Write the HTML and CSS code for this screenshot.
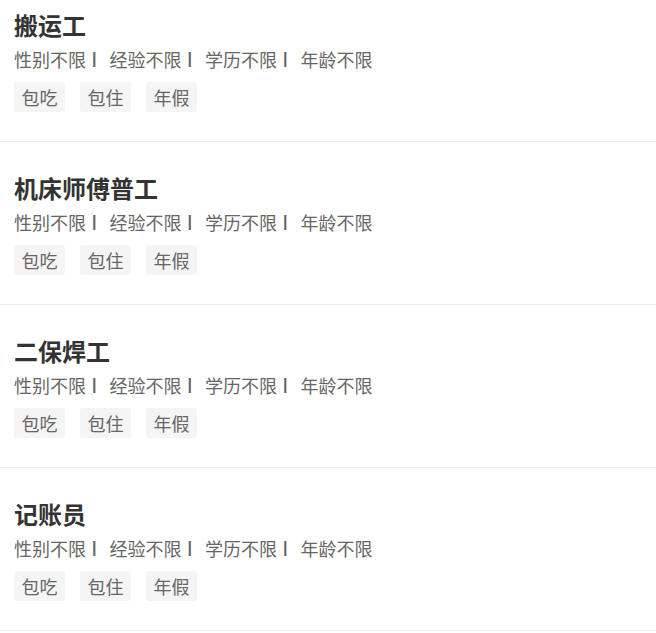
FILE: index.html
```html
<!DOCTYPE html>
<html lang="zh-CN">
<head>
<meta charset="utf-8">
<title>职位列表</title>
<link rel="stylesheet" href="styles.css">
</head>
<body>
<ul class="job-list">
  <li class="job job-first">
    <h3 class="job-title">搬运工</h3>
    <div class="job-reqs"><span class="req">性别不限</span><span class="sep">|</span><span class="req">经验不限</span><span class="sep">|</span><span class="req">学历不限</span><span class="sep">|</span><span class="req">年龄不限</span></div>
    <div class="job-tags"><span class="tag">包吃</span><span class="tag">包住</span><span class="tag">年假</span></div>
  </li>
  <li class="job">
    <h3 class="job-title">机床师傅普工</h3>
    <div class="job-reqs"><span class="req">性别不限</span><span class="sep">|</span><span class="req">经验不限</span><span class="sep">|</span><span class="req">学历不限</span><span class="sep">|</span><span class="req">年龄不限</span></div>
    <div class="job-tags"><span class="tag">包吃</span><span class="tag">包住</span><span class="tag">年假</span></div>
  </li>
  <li class="job">
    <h3 class="job-title">二保焊工</h3>
    <div class="job-reqs"><span class="req">性别不限</span><span class="sep">|</span><span class="req">经验不限</span><span class="sep">|</span><span class="req">学历不限</span><span class="sep">|</span><span class="req">年龄不限</span></div>
    <div class="job-tags"><span class="tag">包吃</span><span class="tag">包住</span><span class="tag">年假</span></div>
  </li>
  <li class="job">
    <h3 class="job-title">记账员</h3>
    <div class="job-reqs"><span class="req">性别不限</span><span class="sep">|</span><span class="req">经验不限</span><span class="sep">|</span><span class="req">学历不限</span><span class="sep">|</span><span class="req">年龄不限</span></div>
    <div class="job-tags"><span class="tag">包吃</span><span class="tag">包住</span><span class="tag">年假</span></div>
  </li>
</ul>
</body>
</html>
```
FILE: styles.css
```css
html, body {
  margin: 0;
  padding: 0;
  background: #fff;
}
body {
  font-family: "Noto Sans CJK SC", "Noto Sans", sans-serif;
  overflow: hidden;
}
.job-list {
  list-style: none;
  margin: 0;
  padding: 0;
}
.job {
  padding: 30px 14px 29px;
  border-bottom: 1px solid #eeeeee;
}
.job-first {
  padding-top: 9px;
}
.job-title {
  margin: 0;
  font-size: 24px;
  line-height: 32px;
  font-weight: 700;
  color: #333;
}
.job-reqs {
  margin-top: 6px;
  display: flex;
  align-items: center;
  font-size: 18px;
  line-height: 24px;
  color: #666;
  white-space: nowrap;
}
.sep {
  font-family: "Liberation Sans", Arial, sans-serif;
  font-size: 16px;
  font-weight: 700;
  line-height: 24px;
  color: #666;
  margin: 0 13px 0 6px;
}
.job-tags {
  margin-top: 11px;
  display: flex;
  gap: 15px;
}
.tag {
  height: 30px;
  line-height: 30px;
  padding: 0 7.5px;
  font-size: 18px;
  color: #666;
  background: #f5f5f5;
  border-radius: 3px;
}
```
